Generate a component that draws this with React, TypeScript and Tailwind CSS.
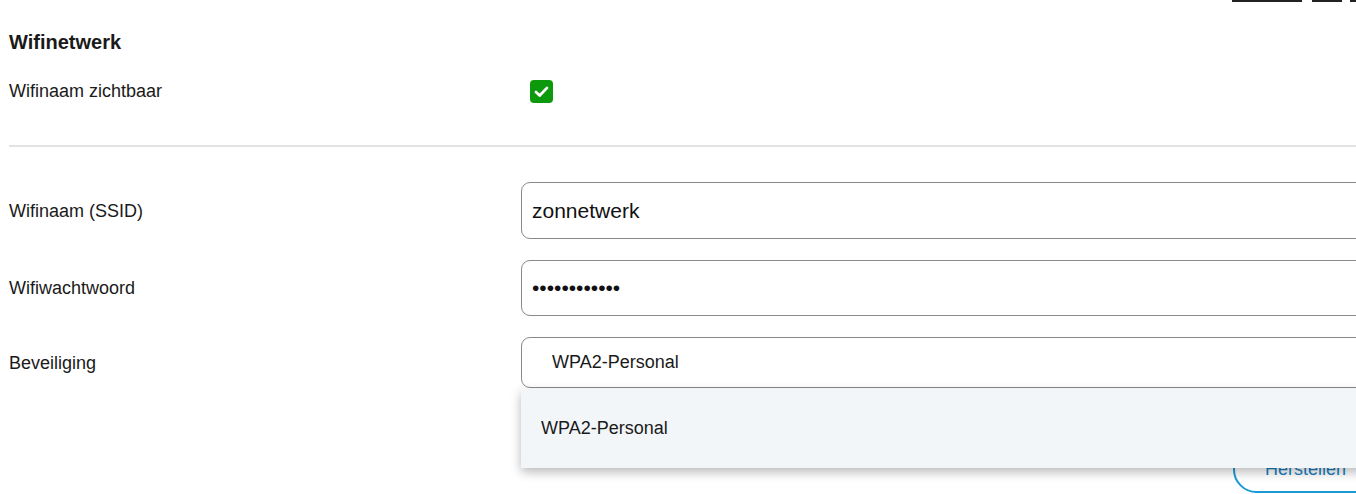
import React from "react";

export default function App() {
  return (
    <div
      className="relative w-[1356px] h-[494px] overflow-hidden bg-white text-[#1a1a1a]"
      style={{ fontFamily: '"Liberation Sans", Arial, sans-serif' }}
    >
      {/* cut-off link underlines at the very top */}
      <div className="absolute top-0 left-[1232px] h-[2px] w-[70px] bg-[#222]" />
      <div className="absolute top-0 left-[1312px] h-[2px] w-[30px] bg-[#222]" />
      <div className="absolute top-0 left-[1350px] h-[2px] w-[6px] bg-[#222]" />

      <div className="pl-[9px] pt-[30px]">
        <h2 className="text-[20px] leading-[24px] font-bold text-[#1a1a1a]">Wifinetwerk</h2>

        <div className="flex items-center h-[24px] mt-[25px]">
          <div className="w-[512px] shrink-0 text-[18px] leading-[22px]">Wifinaam zichtbaar</div>
          <div className="ml-[9px] shrink-0 w-[23px] h-[23px] rounded-[4px] bg-[#0c9a0c] flex items-center justify-center">
            <svg width="17" height="17" viewBox="0 0 16 16" fill="none">
              <path d="M2.8 8.4 L6.3 11.8 L13.2 4.6" stroke="white" strokeWidth="2.6" strokeLinecap="round" strokeLinejoin="round" />
            </svg>
          </div>
        </div>

        <div className="mt-[42px] h-[2px] bg-[#e3e3e3]" />

        <div className="mt-[35px] flex flex-col gap-[21px]">
          <div className="flex items-center">
            <div className="w-[512px] shrink-0 text-[18px] leading-[22px]">Wifinaam (SSID)</div>
            <div className="w-[900px] shrink-0 h-[57px] rounded-[9px] border border-[#8a8a8a] flex items-center pl-[10px] text-[21px] text-[#111]">
              zonnetwerk
            </div>
          </div>
          <div className="flex items-center">
            <div className="w-[512px] shrink-0 text-[18px] leading-[22px]">Wifiwachtwoord</div>
            <div className="w-[900px] shrink-0 h-[56px] rounded-[9px] border border-[#8a8a8a] flex items-center pl-[10px] text-[21px] text-[#111]">
              ••••••••••••
            </div>
          </div>
          <div className="flex items-center">
            <div className="w-[512px] shrink-0 text-[18px] leading-[22px]">Beveiliging</div>
            <div className="w-[900px] shrink-0 h-[51px] rounded-[9px] border border-[#8a8a8a] flex items-center pl-[30px] text-[18px] text-[#1a1a1a]">
              WPA2-Personal
            </div>
          </div>
        </div>
      </div>

      {/* Herstellen button (partly behind dropdown) */}
      <div className="absolute left-[1233px] top-[446px] w-[200px] h-[47px] rounded-full border-2 border-[#1b9ad8] flex items-center pl-[30px] text-[18px] text-[#1a7fc2]">
        Herstellen
      </div>

      {/* dropdown menu */}
      <div className="absolute left-[521px] top-[389px] w-[900px] h-[79px] bg-[#f3f6f9] shadow-[0_4px_10px_rgba(0,0,0,0.28)] flex items-center pl-[20px] text-[18px] text-[#1a1a1a]">
        WPA2-Personal
      </div>
    </div>
  );
}
